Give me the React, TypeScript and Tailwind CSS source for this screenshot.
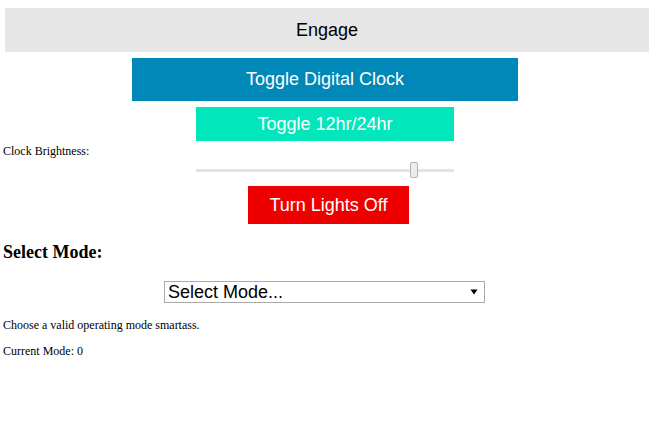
import React from "react";

export default function App() {
  const sans = { fontFamily: '"Liberation Sans", Arial, sans-serif' };
  return (
    <div
      className="w-[653px] h-[429px] bg-white flex flex-col text-black"
      style={{ fontFamily: '"Liberation Serif", "Times New Roman", serif' }}
    >
      <div className="flex flex-col items-center pt-[8px]">
        <button
          className="w-[644px] h-[44px] ml-[1px] bg-[#e6e6e6] text-black text-[18px] flex items-center justify-center"
          style={sans}
        >
          Engage
        </button>
        <button
          className="mt-[6px] w-[386px] h-[43px] -ml-[3px] bg-[#0088b8] text-white text-[18px] flex items-center justify-center"
          style={sans}
        >
          Toggle Digital Clock
        </button>
        <button
          className="mt-[6px] w-[258px] h-[34px] -ml-[3px] bg-[#02e6bc] text-white text-[18px] flex items-center justify-center"
          style={sans}
        >
          Toggle 12hr/24hr
        </button>
      </div>
      <div className="mt-[3px] pl-[3px] text-[12px] leading-[14px]">Clock Brightness:</div>
      <div className="mt-[4px] flex justify-center">
        <div className="relative w-[258px] h-[16px] -ml-[3px] flex items-center">
          <div className="w-full h-[3px] bg-[#e3e3e3]" />
          <div className="absolute left-[214px] top-0 w-[8px] h-[16px] bg-[#ececec] border border-[#b4b4b4] rounded-[2px]" />
        </div>
      </div>
      <div className="mt-[8px] flex justify-center">
        <button
          className="w-[161px] h-[38px] ml-[4px] bg-[#ee0000] text-white text-[18px] flex items-center justify-center"
          style={sans}
        >
          Turn Lights Off
        </button>
      </div>
      <h3 className="mt-[17px] pl-[3px] text-[18px] leading-[22px] font-bold">Select Mode:</h3>
      <div className="mt-[18px] flex justify-center">
        <div
          className="w-[321px] h-[22px] -ml-[4px] border border-[#a9a9a9] bg-white flex items-center justify-between pl-[3px] pr-[6px] text-[18px] leading-[20px]"
          style={sans}
        >
          <span>Select Mode...</span>
          <svg width="8" height="6" viewBox="0 0 8 6">
            <path d="M0.5 0.5 L7.5 0.5 L4 5.5 Z" fill="#000" />
          </svg>
        </div>
      </div>
      <p className="mt-[15px] pl-[3px] text-[12px] leading-[14px]">Choose a valid operating mode smartass.</p>
      <p className="mt-[12px] pl-[3px] text-[12px] leading-[14px]">Current Mode: 0</p>
    </div>
  );
}
